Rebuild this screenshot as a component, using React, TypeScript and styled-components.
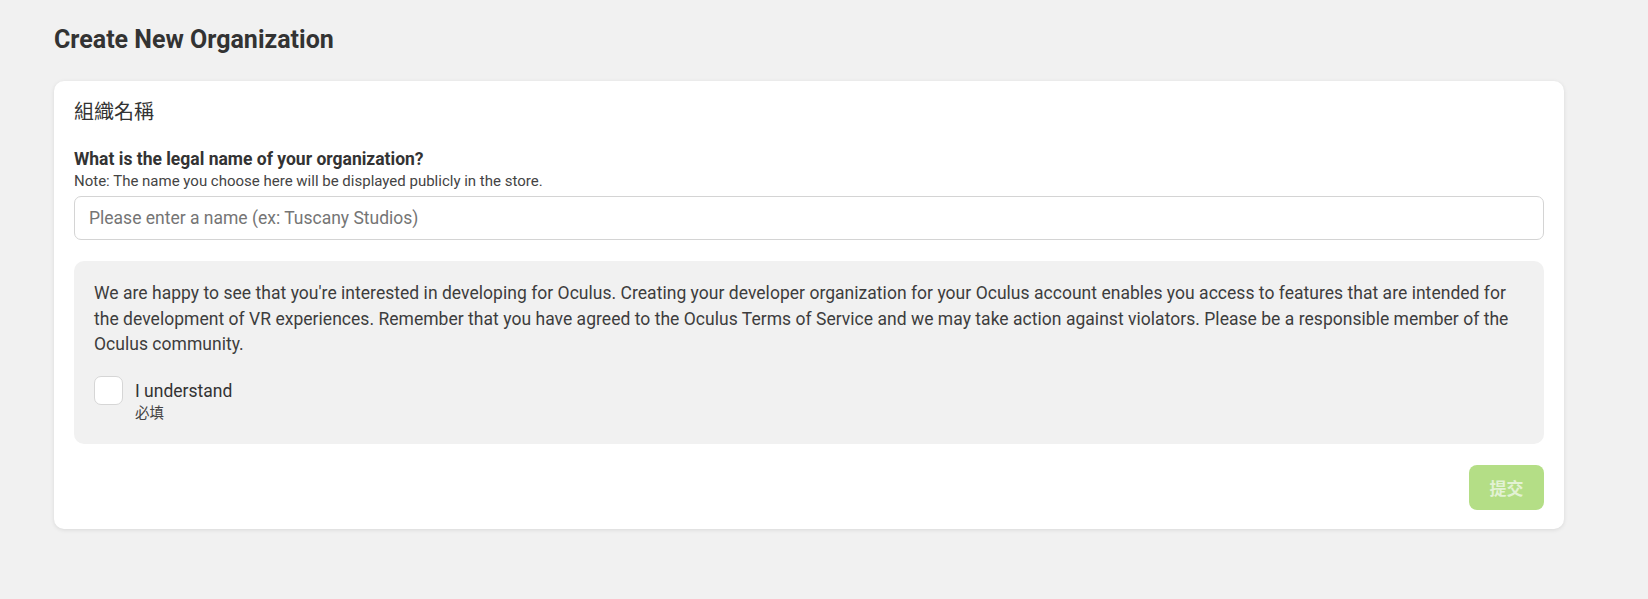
import React, { useState } from "react";
import styled, { createGlobalStyle } from "styled-components";

const GlobalStyle = createGlobalStyle`
  html, body {
    margin: 0;
    padding: 0;
    background: #f1f1f1;
    font-family: Roboto, "Noto Sans CJK TC", sans-serif;
    color: #3b3b3b;
  }
  * { box-sizing: border-box; }
`;

const Page = styled.div`
  padding: 26px 84px 40px 54px;
`;

const Title = styled.h1`
  margin: 0 0 27px;
  font-size: 25px;
  line-height: 28px;
  font-weight: 700;
  color: #333;
`;

const Card = styled.div`
  background: #fff;
  border-radius: 10px;
  padding: 20px 20px 19px;
  box-shadow: 0 1px 4px rgba(0, 0, 0, 0.1);
`;

const SectionTitle = styled.div`
  font-size: 20px;
  line-height: 22px;
  color: #333;
  margin-bottom: 26px;
`;

const FieldLabel = styled.div`
  font-size: 17.5px;
  line-height: 20px;
  font-weight: 700;
  color: #333;
`;

const FieldNote = styled.div`
  font-size: 15px;
  line-height: 18px;
  color: #444;
  margin: 3px 0 6px;
`;

const TextInput = styled.input`
  display: block;
  width: 100%;
  height: 44px;
  padding: 0 14px;
  border: 1px solid #d4d4d4;
  border-radius: 7px;
  font-family: Roboto, sans-serif;
  font-size: 17.5px;
  color: #333;
  outline: none;

  &::placeholder {
    color: #757575;
  }
`;

const Notice = styled.div`
  margin-top: 21px;
  background: #f1f1f1;
  border-radius: 10px;
  padding: 20px 20px 21px;
`;

const NoticeText = styled.p`
  margin: 0 0 18px;
  font-size: 17.5px;
  letter-spacing: 0.03px;
  line-height: 25.5px;
  color: #3d3d3d;
`;

const CheckRow = styled.label`
  display: flex;
  align-items: flex-start;
  gap: 12px;
  cursor: pointer;
`;

const Box = styled.span<{ $checked: boolean }>`
  width: 29px;
  height: 29px;
  flex: none;
  border-radius: 7px;
  border: 1px solid #d6d6d6;
  background: ${(p) => (p.$checked ? "#7cc243" : "#fff")};
`;

const CheckText = styled.div`
  display: flex;
  flex-direction: column;
  padding-top: 5px;
`;

const CheckLabel = styled.span`
  font-size: 17.5px;
  line-height: 21px;
  color: #333;
`;

const Required = styled.span`
  font-size: 14.5px;
  line-height: 18px;
  color: #444;
  margin-top: 3px;
`;

const Footer = styled.div`
  display: flex;
  justify-content: flex-end;
  margin-top: 21px;
`;

const SubmitButton = styled.button`
  width: 75px;
  height: 45px;
  border: none;
  border-radius: 8px;
  background: #b4de86;
  color: #e3f2d4;
  font-family: "Noto Sans CJK TC", sans-serif;
  font-size: 17px;
  font-weight: 700;
  cursor: not-allowed;
`;

export default function App() {
  const [agreed, setAgreed] = useState(false);

  return (
    <Page>
      <GlobalStyle />
      <Title>Create New Organization</Title>
      <Card>
        <SectionTitle>組織名稱</SectionTitle>
        <FieldLabel>What is the legal name of your organization?</FieldLabel>
        <FieldNote>
          Note: The name you choose here will be displayed publicly in the store.
        </FieldNote>
        <TextInput placeholder="Please enter a name (ex: Tuscany Studios)" />
        <Notice>
          <NoticeText>
            We are happy to see that you're interested in developing for Oculus.
            Creating your developer organization for your Oculus account enables
            you access to features that are intended for the development of VR
            experiences. Remember that you have agreed to the Oculus Terms of
            Service and we may take action against violators. Please be a
            responsible member of the Oculus community.
          </NoticeText>
          <CheckRow onClick={() => setAgreed(!agreed)}>
            <Box $checked={agreed} />
            <CheckText>
              <CheckLabel>I understand</CheckLabel>
              <Required>必填</Required>
            </CheckText>
          </CheckRow>
        </Notice>
        <Footer>
          <SubmitButton disabled={!agreed}>提交</SubmitButton>
        </Footer>
      </Card>
    </Page>
  );
}
